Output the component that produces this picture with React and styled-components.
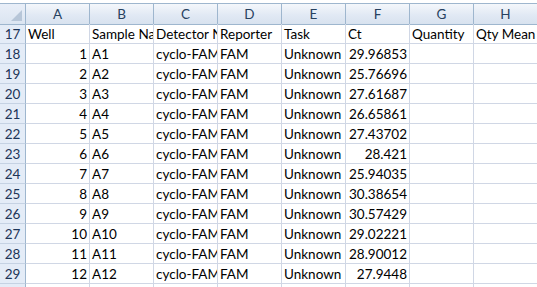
import styled, { createGlobalStyle } from "styled-components";

const GlobalStyle = createGlobalStyle`
  html, body {
    margin: 0;
    padding: 0;
    background: #ffffff;
    overflow: hidden;
  }
`;

const columns = ["A", "B", "C", "D", "E", "F", "G", "H"];

const header = ["Well", "Sample Name", "Detector Name", "Reporter", "Task", "Ct", "Quantity", "Qty Mean"];

const samples = [
  [1, "A1", 29.96853],
  [2, "A2", 25.76696],
  [3, "A3", 27.61687],
  [4, "A4", 26.65861],
  [5, "A5", 27.43702],
  [6, "A6", 28.421],
  [7, "A7", 25.94035],
  [8, "A8", 30.38654],
  [9, "A9", 30.57429],
  [10, "A10", 29.02221],
  [11, "A11", 28.90012],
  [12, "A12", 27.9448],
];

const Sheet = styled.div`
  width: 537px;
  height: 287px;
  overflow: hidden;
  font-family: "Lato", "Liberation Sans", sans-serif;
  color: #000;
`;

const TopStrip = styled.div`
  height: 3px;
  background: #ffffff;
  border-bottom: 1px solid #9eb6ce;
`;

const Grid = styled.div`
  display: grid;
  grid-template-columns: 26px repeat(8, 64px);
  grid-auto-rows: 20px;
  width: 538px;
`;

const Corner = styled.div`
  position: relative;
  height: 21px;
  background: linear-gradient(#e9eff8, #dbe5f1);
  border-right: 1px solid #9eb6ce;
  border-bottom: 1px solid #9eb6ce;
  box-sizing: border-box;
  &::after {
    content: "";
    position: absolute;
    right: 3px;
    bottom: 3px;
    width: 0;
    height: 0;
    border-left: 11px solid transparent;
    border-bottom: 11px solid #b7c6d8;
  }
`;

const ColHead = styled.div`
  height: 21px;
  display: flex;
  align-items: center;
  justify-content: center;
  background: linear-gradient(#f4f7fb, #e1e9f4 55%, #d8e2ef);
  border-right: 1px solid #9eb6ce;
  border-bottom: 1px solid #9eb6ce;
  box-sizing: border-box;
  font-size: 13.5px;
  color: #27415f;
`;

const RowHead = styled.div`
  display: flex;
  align-items: flex-end;
  justify-content: center;
  padding-bottom: 1px;
  background: #e4ecf7;
  border-right: 1px solid #9eb6ce;
  border-bottom: 1px solid #c5d2e3;
  box-sizing: border-box;
  font-size: 13.5px;
  color: #1d3557;
`;

const Cell = styled.div`
  display: flex;
  align-items: flex-end;
  justify-content: ${(p) => (p.$num ? "flex-end" : "flex-start")};
  padding: 0 2px 1px 2px;
  border-right: 1px solid #d0d7e5;
  border-bottom: 1px solid #d0d7e5;
  box-sizing: border-box;
  overflow: ${(p) => (p.$spill ? "visible" : "hidden")};
  white-space: nowrap;
  font-size: 13.5px;
`;

const Row = ({ num, values }) => (
  <>
    <RowHead>{num}</RowHead>
    {values.map((v, i) => (
      <Cell key={i} $num={typeof v === "number"} $spill={i === 7}>
        {v}
      </Cell>
    ))}
  </>
);

const App = () => (
  <Sheet>
    <GlobalStyle />
    <TopStrip />
    <Grid>
      <Corner />
      {columns.map((c) => (
        <ColHead key={c}>{c}</ColHead>
      ))}
      <Row num={17} values={header} />
      {samples.map(([n, name, ct], i) => (
        <Row key={n} num={18 + i} values={[n, name, "cyclo-FAM", "FAM", "Unknown", ct, "", ""]} />
      ))}
      <Row num={30} values={["", "", "", "", "", "", "", ""]} />
    </Grid>
  </Sheet>
);

export default App;
